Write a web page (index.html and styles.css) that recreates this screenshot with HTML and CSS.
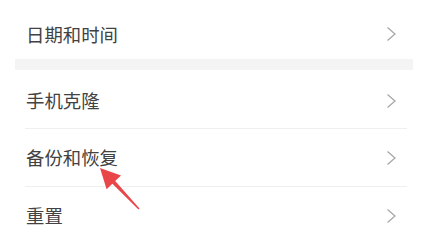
FILE: index.html
```html
<!DOCTYPE html>
<html lang="zh-CN">
<head>
<meta charset="utf-8">
<link rel="stylesheet" href="styles.css">
</head>
<body>
<div class="page">
  <div class="row first"><span class="label">日期和时间</span><span class="chev"><svg width="11" height="16" viewBox="0 0 11 16"><path d="M1.5 1.5 L9 8 L1.5 14.5" fill="none" stroke="#a8a8a8" stroke-width="1.3"/></svg></span></div>
  <div class="band"></div>
  <div class="row second"><span class="label">手机克隆</span><span class="chev"><svg width="11" height="16" viewBox="0 0 11 16"><path d="M1.5 1.5 L9 8 L1.5 14.5" fill="none" stroke="#a8a8a8" stroke-width="1.3"/></svg></span></div>
  <div class="divider"></div>
  <div class="row"><span class="label">备份和恢复</span><span class="chev"><svg width="11" height="16" viewBox="0 0 11 16"><path d="M1.5 1.5 L9 8 L1.5 14.5" fill="none" stroke="#a8a8a8" stroke-width="1.3"/></svg></span></div>
  <div class="divider"></div>
  <div class="row"><span class="label">重置</span><span class="chev"><svg width="11" height="16" viewBox="0 0 11 16"><path d="M1.5 1.5 L9 8 L1.5 14.5" fill="none" stroke="#a8a8a8" stroke-width="1.3"/></svg></span></div>
  <svg class="arrow" width="60" height="60" viewBox="0 0 60 60">
    <path d="M10 8 L31 15.5 L25.2 21 L49.5 48.5 L48.5 49.5 L22.4 23.8 L16.6 29.3 Z" fill="#e9464a"/>
  </svg>
</div>
</body>
</html>
```

FILE: styles.css
```css
html, body {
  margin: 0;
  padding: 0;
  background: #ffffff;
}
.page {
  position: relative;
  width: 427px;
  height: 245px;
  overflow: hidden;
  font-family: "Noto Sans CJK SC", "Noto Sans", sans-serif;
}
.row {
  display: flex;
  align-items: center;
  justify-content: space-between;
  height: 57px;
  padding: 0 30px 0 26px;
}
.row.first {
  height: 50px;
  padding-top: 9px;
}
.row.second {
  height: 55px;
  padding-top: 3px;
}
.label {
  font-size: 18.4px;
  color: #424242;
  line-height: 1;
}
.chev {
  display: flex;
  align-items: center;
}
.band {
  height: 11px;
  margin: 0 14px 0 15px;
  background: #f4f4f4;
}
.divider {
  height: 1px;
  margin: 0 20px 0 25px;
  background: #efefef;
}
.arrow {
  position: absolute;
  left: 90px;
  top: 160px;
}
```
